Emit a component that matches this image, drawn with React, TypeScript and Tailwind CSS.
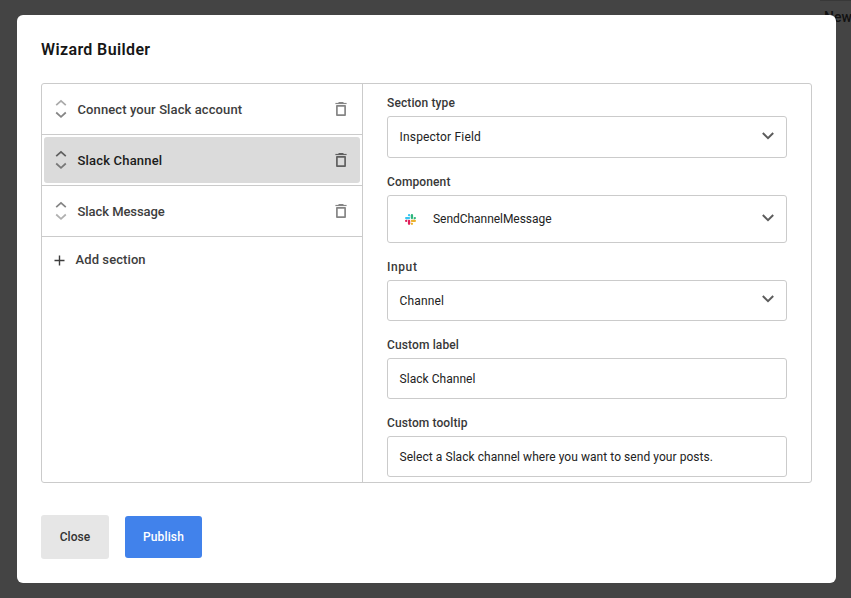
import type { ReactNode } from "react";

function Sorter({ up, down }: { up: string; down: string }) {
  return (
    <svg width="12" height="20" viewBox="0 0 12 20" fill="none" strokeWidth="1.7">
      <path d="M1.2 6.2 6 1.8l4.8 4.4" className={up} />
      <path d="M1.2 13.5 6 17.9l4.8-4.4" className={down} />
    </svg>
  );
}

function Trash({ className }: { className: string }) {
  return (
    <svg width="12" height="14" viewBox="0 0 12 14" fill="none" className={className}>
      <path d="M3.5 .5h5" stroke="currentColor" />
      <path d="M.4 1.5h11.2" stroke="currentColor" strokeWidth="1.2" />
      <path d="M1.9 3.8h8.2v9.3h-8.2z" stroke="currentColor" strokeWidth="1.7" strokeLinejoin="round" />
    </svg>
  );
}

function Chevron({ className }: { className: string }) {
  return (
    <svg width="12" height="8" viewBox="0 0 12 8" fill="none" stroke="#5c5c5c" strokeWidth="2" className={className}>
      <path d="M.8 1 6 6.1 11.2 1" />
    </svg>
  );
}

function SlackLogo() {
  return (
    <svg width="11" height="11" viewBox="0 0 24 24">
      <path fill="#E01E5A" d="M5.042 15.165a2.528 2.528 0 0 1-2.52 2.523A2.528 2.528 0 0 1 0 15.165a2.527 2.527 0 0 1 2.522-2.52h2.52v2.52zM6.313 15.165a2.527 2.527 0 0 1 2.521-2.52 2.527 2.527 0 0 1 2.521 2.52v6.313A2.528 2.528 0 0 1 8.834 24a2.528 2.528 0 0 1-2.521-2.522v-6.313z" />
      <path fill="#36C5F0" d="M8.834 5.042a2.528 2.528 0 0 1-2.521-2.52A2.528 2.528 0 0 1 8.834 0a2.528 2.528 0 0 1 2.521 2.522v2.52H8.834zM8.834 6.313a2.528 2.528 0 0 1 2.521 2.521 2.528 2.528 0 0 1-2.521 2.521H2.522A2.528 2.528 0 0 1 0 8.834a2.528 2.528 0 0 1 2.522-2.521h6.312z" />
      <path fill="#2EB67D" d="M18.956 8.834a2.528 2.528 0 0 1 2.522-2.521A2.528 2.528 0 0 1 24 8.834a2.528 2.528 0 0 1-2.522 2.521h-2.522V8.834zM17.688 8.834a2.528 2.528 0 0 1-2.523 2.521 2.527 2.527 0 0 1-2.52-2.521V2.522A2.527 2.527 0 0 1 15.165 0a2.528 2.528 0 0 1 2.523 2.522v6.312z" />
      <path fill="#ECB22E" d="M15.165 18.956a2.528 2.528 0 0 1 2.523 2.522A2.528 2.528 0 0 1 15.165 24a2.527 2.527 0 0 1-2.52-2.522v-2.522h2.52zM15.165 17.688a2.527 2.527 0 0 1-2.52-2.523 2.526 2.526 0 0 1 2.52-2.52h6.313A2.527 2.527 0 0 1 24 15.165a2.528 2.528 0 0 1-2.522 2.523h-6.313z" />
    </svg>
  );
}

type SectionProps = { text: string; tracking: string; selected?: boolean; up: string; down: string };

function Section({ text, tracking, selected, up, down }: SectionProps) {
  return (
    <li className="h-[51px] border-b border-[#cbcbcb] p-0.5">
      <div className={`flex h-[46px] items-center rounded-[3px] pl-[11px] pr-[13px] ${selected ? "bg-[#dbdbdb] text-[#1a1a1a]" : "text-[#3d3d3d]"}`}>
        <Sorter up={up} down={down} />
        <span className={`ml-[10.5px] flex-1 pt-0.5 text-[13px] leading-5 font-medium ${tracking}`}>{text}</span>
        <Trash className={selected ? "text-[#5f5f5f]" : "text-[#858585]"} />
      </div>
    </li>
  );
}

type FieldProps = { label: string; labelTracking: string; height: string; chevron?: string; children: ReactNode };

function Field({ label, labelTracking, height, chevron, children }: FieldProps) {
  return (
    <div className="flex flex-col gap-1">
      <label className={`h-5 text-xs leading-[23px] font-medium text-[#383838] ${labelTracking}`}>{label}</label>
      <div className={`flex w-[400px] items-center justify-between rounded-[3px] border border-[#cbcbcb] pl-[11.5px] pr-3 text-xs text-[#222] ${height}`}>
        {children}
        {chevron && <Chevron className={chevron} />}
      </div>
    </div>
  );
}

export default function App() {
  return (
    <div className="relative h-[598px] w-[851px] overflow-hidden bg-[#444] px-[17px] pt-[15px] font-['Roboto',sans-serif]">
      <div className="absolute top-0 right-0 h-px w-[31px] bg-[#383838]" />
      <div className="absolute top-[7px] left-[824px] text-sm leading-5 font-medium whitespace-nowrap text-[#111]">New</div>
      <main className="relative flex h-[568px] w-[819px] flex-col rounded-md bg-white px-6 pt-[23px]">
        <h1 className="h-6 text-base leading-6 font-semibold tracking-[0.374px] text-[#161616]">Wizard Builder</h1>
        <div className="mt-[21px] flex h-[400px] w-[771px] rounded-[3px] border border-[#cbcbcb]">
          <div className="w-[321px] border-r border-[#cbcbcb]">
            <ul>
              <Section text="Connect your Slack account" tracking="tracking-[0.1px]" up="stroke-[#aaa]" down="stroke-[#858585]" />
              <Section text="Slack Channel" tracking="tracking-[0.18px]" selected up="stroke-[#5f5f5f]" down="stroke-[#777]" />
              <Section text="Slack Message" tracking="tracking-[-0.06px]" up="stroke-[#858585]" down="stroke-[#b0b0b0]" />
            </ul>
            <button className="mt-[13px] flex items-center gap-[11px] pl-[11.5px] text-[13px] leading-5 font-medium tracking-[0.09px] text-[#3d3d3d]">
              <svg width="11" height="11" viewBox="0 0 11 11" fill="none" stroke="#3d3d3d" strokeWidth="1.4">
                <path d="M5.5 .5v10M.5 5.5h10" />
              </svg>
              <span>Add section</span>
            </button>
          </div>
          <div className="flex flex-col gap-[13px] pt-2 pl-6">
            <Field label="Section type" labelTracking="tracking-[0.122px]" height="h-[42px]" chevron="mb-0.5">
              <span className="tracking-[0.182px]">Inspector Field</span>
            </Field>
            <Field label="Component" labelTracking="tracking-[0.118px]" height="h-12" chevron="mb-0.5">
              <span className="flex flex-1 items-center gap-[17px] pl-[5.5px] tracking-[-0.041px]">
                <SlackLogo />
                SendChannelMessage
              </span>
            </Field>
            <Field label="Input" labelTracking="tracking-[0.6px]" height="h-[41px]" chevron="mb-[3px]">
              <span className="tracking-[0.145px]">Channel</span>
            </Field>
            <Field label="Custom label" labelTracking="tracking-[0.121px]" height="h-[41px]">
              <span className="tracking-[0.046px]">Slack Channel</span>
            </Field>
            <Field label="Custom tooltip" labelTracking="tracking-[0.098px]" height="h-[41px]">
              <span className="tracking-[0.055px]">Select a Slack channel where you want to send your posts.</span>
            </Field>
          </div>
        </div>
        <div className="mt-8 flex items-center gap-4">
          <button className="h-11 w-[68px] rounded-[3px] bg-[#e6e6e6] text-xs font-medium tracking-[0.037px] text-[#333]">Close</button>
          <button className="h-[42px] w-[77px] rounded-[3px] bg-[#4182eb] text-xs font-medium tracking-[0.136px] text-white">Publish</button>
        </div>
      </main>
    </div>
  );
}
